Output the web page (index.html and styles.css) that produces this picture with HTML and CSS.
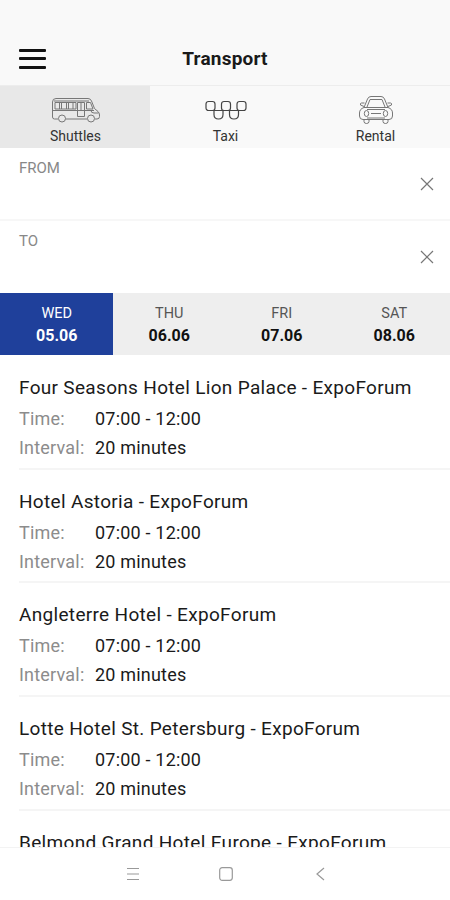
FILE: index.html
```html
<!DOCTYPE html>
<html lang="en">
<head>
    <meta charset="UTF-8">
    <meta name="viewport" content="width=device-width, initial-scale=1.0">
    <title>Transport</title>
    <link rel="stylesheet" href="styles.css">
</head>
<body>
    <header class="header">
        <button class="menu-btn" aria-label="Menu">
            <span></span>
            <span></span>
            <span></span>
        </button>
        <h1>Transport</h1>
    </header>

    <nav class="tabs">
        <a class="tab active">
            <svg width="48" height="26" viewBox="0 0 48 26">
                <path d="M6 22H2.5Q.5 22 .5 20V5Q.5 1.500 4 1.500H36Q38.500 1.500 39.500 4L42.500 11.500 46 14.500Q47.500 16 47.500 18V19.500Q47.500 22 45 22H43M13.500 22H35M.5 13.500H42M2 4H37M39 13.500Q39 16 42 16H46.500"/>
                <path d="M3 5.500H24V12H3zM7.500 5.500V12M9.500 5.500V12M14.500 5.500V12M16.500 5.500V12M21 5.500V12M25.500 5.500H32.500V19.500H25.500zM29 5.500V13M34.500 5.500H38.500L41 12H34.500z"/>
                <circle cx="10" cy="21.500" r="3.500"/>
                <circle cx="39" cy="21.500" r="3.500"/>
            </svg>
            <span>Shuttles</span>
        </a>
        <a class="tab">
            <svg class="dark" width="44" height="26" viewBox="0 0 44 26">
                <rect x="2" y="4.500" width="9" height="9" rx="2.500"/>
                <rect x="17.500" y="4.500" width="9" height="9" rx="2.500"/>
                <rect x="33" y="4.500" width="9" height="9" rx="2.500"/>
                <path d="M9 13.500H35M10 13.500V17.500Q10 22 14.500 22Q19 22 19 17.500V13.500M25.500 13.500V17.500Q25.500 22 30 22Q34.500 22 34.500 17.500V13.500"/>
            </svg>
            <span>Taxi</span>
        </a>
        <a class="tab">
            <svg class="car" width="36" height="30" viewBox="0 0 36 30">
                <path d="M6 12.500L9.500 4Q10.500 1.500 13 1.500H23Q25.500 1.500 26.500 4L30 12.500M9 12L12 4.500H24L27 12M6 12.500H30Q34.500 14 34.500 18V21Q34.500 24.500 31 24.500H5Q1.500 24.500 1.500 21V18Q1.500 14 6 12.500zM6.500 8H3.500Q2 8 2.500 10L6 11.500M29.500 8H32.500Q34 8 33.500 10L30 11.500M13 18.500H23M9 14.500H27M9 23H27"/>
                <ellipse cx="8.500" cy="18.500" rx="2.200" ry="3"/>
                <ellipse cx="27.500" cy="18.500" rx="2.200" ry="3"/>
                <path d="M6 25V26.500Q6 28.500 8.500 28.500T11 26.500V25M25 25V26.500Q25 28.500 27.500 28.500T30 26.500V25"/>
            </svg>
            <span>Rental</span>
        </a>
    </nav>

    <section class="search">
        <div class="field">
            <label>FROM</label>
            <svg width="14" height="14" viewBox="0 0 14 14"><path d="M1 1L13 13M13 1L1 13"/></svg>
        </div>
        <div class="field">
            <label>TO</label>
            <svg width="14" height="14" viewBox="0 0 14 14"><path d="M1 1L13 13M13 1L1 13"/></svg>
        </div>
    </section>

    <div class="days">
        <div class="day active"><span>WED</span><b>05.06</b></div>
        <div class="day"><span>THU</span><b>06.06</b></div>
        <div class="day"><span>FRI</span><b>07.06</b></div>
        <div class="day"><span>SAT</span><b>08.06</b></div>
    </div>

    <main class="routes">
        <article class="route">
            <h2>Four Seasons Hotel Lion Palace - ExpoForum</h2>
            <p><span>Time:</span>07:00 - 12:00</p>
            <p><span>Interval:</span>20 minutes</p>
        </article>
        <article class="route">
            <h2>Hotel Astoria - ExpoForum</h2>
            <p><span>Time:</span>07:00 - 12:00</p>
            <p><span>Interval:</span>20 minutes</p>
        </article>
        <article class="route">
            <h2>Angleterre Hotel - ExpoForum</h2>
            <p><span>Time:</span>07:00 - 12:00</p>
            <p><span>Interval:</span>20 minutes</p>
        </article>
        <article class="route">
            <h2>Lotte Hotel St. Petersburg - ExpoForum</h2>
            <p><span>Time:</span>07:00 - 12:00</p>
            <p><span>Interval:</span>20 minutes</p>
        </article>
        <article class="route">
            <h2>Belmond Grand Hotel Europe - ExpoForum</h2>
        </article>
    </main>

    <footer class="navbar">
        <svg width="14" height="14" viewBox="0 0 14 14"><path d="M1 1.500H13M1 7H13M1 12.500H13"/></svg>
        <svg width="14" height="14" viewBox="0 0 14 14"><rect x=".7" y=".7" width="12.600" height="12.600" rx="2.500"/></svg>
        <svg width="14" height="14" viewBox="0 0 14 14"><path d="M12 1L5 7 12 13"/></svg>
    </footer>
</body>
</html>
```
FILE: styles.css
```css
* {
    margin: 0;
    padding: 0;
    box-sizing: border-box;
}

body {
    font-family: Roboto, 'Liberation Sans', sans-serif;
    background: #fff;
    color: #1a1a1a;
    height: 900px;
    display: flex;
    flex-direction: column;
    overflow: hidden;
}

svg {
    display: block;
    fill: none;
    stroke: #777;
    stroke-width: 1.2;
}

.header {
    flex: none;
    height: 86px;
    padding: 32px 19px 0;
    background: #f9f9f9;
    border-bottom: 1px solid #ededed;
    display: grid;
    grid-template-columns: 27px 1fr 27px;
    align-items: center;
}

.menu-btn {
    height: 20px;
    border: none;
    background: none;
    display: flex;
    flex-direction: column;
    justify-content: space-between;
}

.menu-btn span {
    width: 27px;
    height: 3px;
    border-radius: 1px;
    background: #111;
}

h1 {
    font-size: 19px;
    font-weight: 700;
    letter-spacing: 0.2px;
    text-align: center;
}

.tabs {
    flex: none;
    height: 62px;
    display: grid;
    grid-template-columns: repeat(3, 1fr);
    background: #f9f9f9;
}

.tab {
    display: flex;
    flex-direction: column;
    align-items: center;
    justify-content: flex-end;
    font-size: 14px;
    line-height: 16px;
    color: #333;
    padding: 0 0 4px 1px;
}

.tab.active {
    background: #e8e8e8;
}

.tab svg {
    margin-bottom: 5px;
    stroke-width: 1;
}

.tab svg.dark {
    stroke: #444;
    stroke-width: 1.2;
}

.tab svg.car {
    margin-bottom: 3px;
}

.field {
    height: 73px;
    padding: 11px 16px 0 19px;
    border-bottom: 2px solid #f7f7f7;
    display: flex;
    justify-content: space-between;
}

.field:last-child {
    height: 72px;
    border-bottom: none;
}

.field label {
    font-size: 15px;
    line-height: 18px;
    color: #888;
}

.field svg {
    margin-top: 18px;
}

.days {
    flex: none;
    height: 62px;
    display: grid;
    grid-template-columns: repeat(4, 1fr);
    background: #eee;
}

.day {
    display: flex;
    flex-direction: column;
    align-items: center;
    padding: 11px 0 0 1px;
    font-size: 14.5px;
    line-height: 20px;
    color: #555;
}

.day b {
    margin-top: 2px;
    font-size: 16px;
    color: #111;
}

.day.active,
.day.active b {
    background: #1f409b;
    color: #fff;
}

.routes {
    flex: 1;
    min-height: 0;
    overflow: hidden;
    padding: 1px 0 0 19px;
}

.route {
    height: 113.7px;
    padding-top: 20px;
    border-bottom: 2px solid #f5f5f5;
}

.route h2 {
    font-size: 19px;
    font-weight: 400;
    line-height: 24px;
    letter-spacing: 0.32px;
    white-space: nowrap;
    margin-bottom: 4px;
}

.route p {
    display: flex;
    font-size: 18px;
    line-height: 29px;
    letter-spacing: 0.2px;
}

.route p span {
    width: 76px;
    color: #8c8c8c;
}

.navbar {
    flex: none;
    height: 53px;
    border-top: 1px solid #f3f3f3;
    display: flex;
    justify-content: center;
    align-items: center;
    gap: 79px;
    padding-left: 1px;
}

.navbar svg {
    stroke: #999;
}
```
